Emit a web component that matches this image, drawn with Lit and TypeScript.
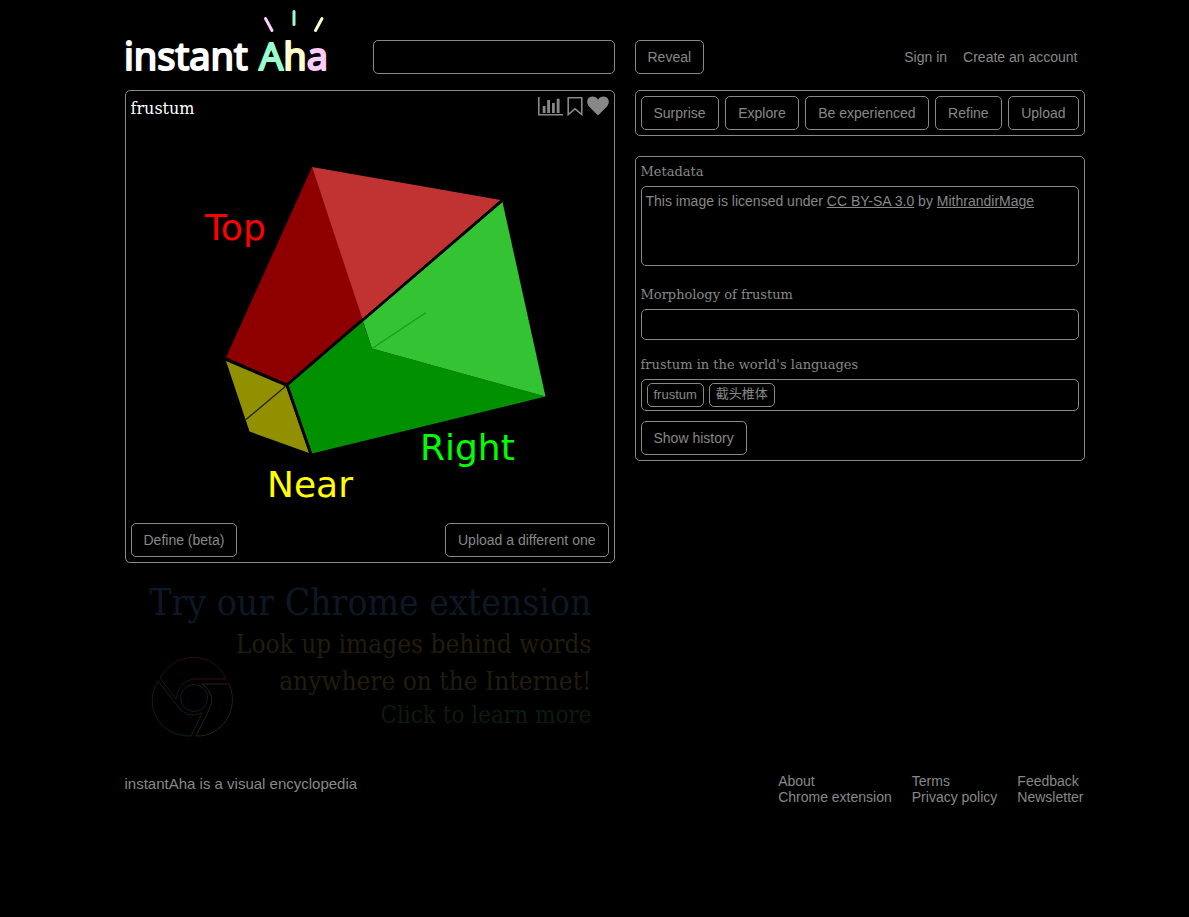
import { LitElement, html, css } from "lit";
import { customElement } from "lit/decorators.js";

const NAV = ["Surprise", "Explore", "Be experienced", "Refine", "Upload"];
const FOOTER = [
  ["About", "Chrome extension"],
  ["Terms", "Privacy policy"],
  ["Feedback", "Newsletter"],
];

const logo = html`<svg class="logo" viewBox="0 0 206 82" width="206" height="82" role="img" aria-label="instant Aha">
  <g class="wordmark">
    <text x="-1" y="62" fill="#fff" stroke="#fff">instant</text>
    <text x="134" y="62"><tspan fill="#9fc" stroke="#9fc">A</tspan><tspan fill="#ffc" stroke="#ffc">h</tspan><tspan fill="#fcf" stroke="#fcf">a</tspan></text>
  </g>
  <g stroke-width="3" stroke-linecap="round">
    <path d="M140.500 10.500L147 22.500" stroke="#fcf" />
    <path d="M169 3.500V16.500" stroke="#9fc" />
    <path d="M197 10.500L190.500 22.500" stroke="#ffc" />
  </g>
</svg>`;

const diagram = html`<svg class="diagram" viewBox="131 124 478 394" role="img" aria-label="Frustum with top, right and near faces">
  <path fill="#8e0000" d="M312 167L226 357.500L286.500 383.500L363 317.500Z" />
  <path fill="#c13333" d="M312 167L500.500 200L362.500 319Z" />
  <path fill="#009000" d="M362.500 321L288.500 385L312 453.500L545.500 396.500L372 348.500Z" />
  <path fill="#33c333" d="M502.500 202L545.500 396.500L372 348.500L363 321.500Z" />
  <path fill="#909000" d="M226 361L286 386.500L309 453L249.500 431.500Z" />
  <path d="M246 419.500L286.500 385.500" stroke="#252500" stroke-width="1.300" />
  <path d="M372 348.500L426 312.500" stroke="#17a017" stroke-width="1.300" />
  <path d="M226 359L287 385L502 200.500M287 385L311 454" fill="none" stroke="#000" stroke-width="2.600" />
  <text x="205" y="240" fill="#f00">Top</text>
  <text x="420" y="460" fill="#0f0">Right</text>
  <text x="267" y="497" fill="#ff0">Near</text>
</svg>`;

const chartIcon = html`<svg viewBox="0 0 25 20" width="25" height="20"><path fill="currentColor" d="M0 1H1.600V18H25V19.600H0ZM4.700 10H7.500V17H4.700ZM9.200 4H12V17H9.200ZM14 7H16.800V17H14ZM18.700 2.800H21.600V17H18.700Z" /></svg>`;
const bookmarkIcon = html`<svg viewBox="0 0 16 20" width="16" height="20"><path fill="none" stroke="currentColor" stroke-width="1.600" d="M1.200 1.800H14.800V18.500L8 12.800L1.200 18.500Z" /></svg>`;
const heartIcon = html`<svg viewBox="0 0 22 20" width="22" height="20"><path fill="currentColor" d="M11 19.500L2 10.500C-1 7 0 2.500 3 1C6 -.300 9.500 .800 11 3.700C12.500 .800 16 -.300 19 1C22 2.500 23 7 20 10.500Z" /></svg>`;

const chromeIcon = html`<svg class="chrome" viewBox="152 657 82 82" width="82" height="82" aria-hidden="true" fill="none">
  <path stroke="#2e0e0e" d="M160 678C176 650 214 651 226 679H194Q179 680 176 699Z" />
  <path stroke="#0d2414" d="M158 681L176 704Q186 720 202 713L191 736C158 737 143 704 158 681Z" />
  <path stroke="#2b220a" d="M202 684H229C240 708 223 737 196 736L208 712Q218 695 202 684Z" />
  <circle stroke="#0c1d2e" cx="194" cy="698" r="13.500" />
</svg>`;

@customElement("app-root")
export class AppRoot extends LitElement {
  static styles = css`
    :host {
      display: block;
      min-height: 100vh;
      background: #000;
      color: #888;
      font: 14px/16px "Liberation Sans", Arial, sans-serif;
    }
    * { box-sizing: border-box; }
    a { color: inherit; text-decoration: none; }
    .page { max-width: 980px; margin: 0 auto; padding: 0 0 20px 20px; }
    .columns { display: grid; grid-template-columns: minmax(0, 49fr) minmax(0, 45fr); column-gap: 20px; align-items: start; }
    header.columns { height: 90px; padding-top: 8px; }
    .search { display: flex; justify-content: space-between; gap: 42px; }
    .search input { margin-top: 32px; flex: 1; min-width: 0; }
    .logo { flex: none; display: block; overflow: visible; }
    .wordmark { font: 400 38px "Noto Sans", sans-serif; stroke-width: 2; stroke-linejoin: round; }
    button, input, .box, .panel { border: 1px solid #888; border-radius: 5px; background: transparent; color: inherit; }
    button { height: 34px; padding: 0 12px; font: inherit; white-space: nowrap; cursor: pointer; }
    input { height: 34px; padding: 0 8px; font: inherit; }
    .actions { display: flex; justify-content: space-between; align-items: center; padding: 32px 7px 0 0; }
    .account { display: flex; gap: 16px; }
    .panel { padding: 5px; }
    .slab { font-family: "Roboto Slab", "DejaVu Serif", serif; font-weight: 400; margin: 0; }
    .title-row { display: flex; justify-content: space-between; align-items: flex-start; height: 28px; }
    .title-row h1 { font-size: 16px; line-height: 26px; color: #fff; }
    .icons { display: flex; gap: 4px; }
    .icons button { display: block; border: 0; padding: 0; height: 20px; }
    .icons svg { display: block; }
    .diagram { display: block; width: 100%; font: 36px "DejaVu Sans", sans-serif; }
    .row { display: flex; justify-content: space-between; margin-top: 5px; }
    .nav { display: flex; justify-content: space-between; margin-bottom: 20px; }
    .info { padding-top: 0; }
    .info h2 { font-size: 13px; line-height: 29px; }
    .box { min-height: 31px; padding: 6px 4px; }
    .meta { height: 80px; margin-bottom: 14px; }
    .meta a { text-decoration: underline; }
    .morph { margin-bottom: 10px; }
    .words { display: flex; gap: 5px; padding: 3px 5px; margin-bottom: 10px; }
    .words button { height: 24px; padding: 0 6px; font: 13px/16px "Liberation Sans", "Noto Sans CJK SC", sans-serif; }
    .words button[lang="zh"] { padding-bottom: 2px; }
    .banner { display: grid; grid-template-columns: 85px 1fr; padding: 18px 23px 0 24px; text-align: right; white-space: nowrap; font-family: "Roboto Slab", "DejaVu Serif Condensed", "DejaVu Serif", serif; font-weight: 100; }
    .banner .big { grid-column: 1 / -1; font-size: 37px; line-height: 44px; color: #0c1826; }
    .banner .mid { font-size: 26px; line-height: 37px; color: #201e0a; }
    .banner .small { font-size: 24px; line-height: 31px; color: #0c1c0f; }
    .chrome { margin-top: 32px; justify-self: end; }
    .lines { display: block; padding-top: 1px; }
    .lines span { display: block; }
    footer { display: flex; justify-content: space-between; margin-top: 34px; padding-right: 1px; }
    .tagline { margin: 3px 0 0; font-size: 15px; line-height: 16px; }
    .links { display: flex; gap: 20px; }
    .links div { display: flex; flex-direction: column; }
  `;

  render() {
    return html`<div class="page">
      <header class="columns">
        <div class="search">${logo}<input type="search" aria-label="Word to reveal" /></div>
        <div class="actions">
          <button>Reveal</button>
          <nav class="account"><a href="#">Sign in</a><a href="#">Create an account</a></nav>
        </div>
      </header>
      <main class="columns">
        <div>
          <section class="panel">
            <div class="title-row">
              <h1 class="slab">frustum</h1>
              <div class="icons">
                <button aria-label="Statistics">${chartIcon}</button>
                <button aria-label="Bookmark">${bookmarkIcon}</button>
                <button aria-label="Like">${heartIcon}</button>
              </div>
            </div>
            ${diagram}
            <div class="row"><button>Define (beta)</button><button>Upload a different one</button></div>
          </section>
          <a class="banner" href="#">
            <span class="big">Try our Chrome extension</span>
            ${chromeIcon}
            <span class="lines">
              <span class="mid">Look up images behind words</span>
              <span class="mid">anywhere on the Internet!</span>
              <span class="small">Click to learn more</span>
            </span>
          </a>
        </div>
        <div>
          <nav class="panel nav">${NAV.map((n) => html`<button>${n}</button>`)}</nav>
          <section class="panel info">
            <h2 class="slab">Metadata</h2>
            <div class="box meta">This image is licensed under <a href="#">CC BY-SA 3.0</a> by <a href="#">MithrandirMage</a></div>
            <h2 class="slab">Morphology of frustum</h2>
            <div class="box morph"></div>
            <h2 class="slab">frustum in the world's languages</h2>
            <div class="box words"><button>frustum</button><button lang="zh">截头椎体</button></div>
            <button>Show history</button>
          </section>
        </div>
      </main>
      <footer>
        <p class="tagline">instantAha is a visual encyclopedia</p>
        <nav class="links">${FOOTER.map((c) => html`<div>${c.map((t) => html`<a href="#">${t}</a>`)}</div>`)}</nav>
      </footer>
    </div>`;
  }
}
